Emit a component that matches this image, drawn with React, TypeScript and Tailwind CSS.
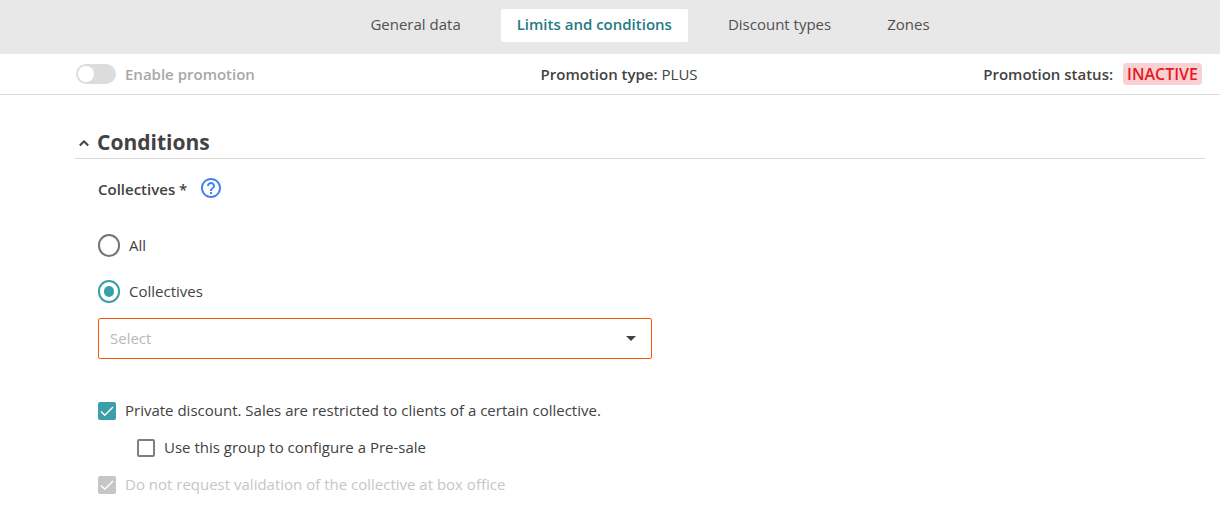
import React, { useState } from 'react';

const tabs = ['General data', 'Limits and conditions', 'Discount types', 'Zones'];

interface CheckboxProps {
  label: string;
  checked: boolean;
  disabled?: boolean;
  className?: string;
  onChange?: (checked: boolean) => void;
}

const Checkbox: React.FC<CheckboxProps> = ({ label, checked, disabled, className = '', onChange }) => (
  <label className={`flex w-fit items-center gap-[9px] leading-5 ${disabled ? 'text-[#c6c6c6]' : ''} ${className}`}>
    <span className="mt-0.5 grid shrink-0">
      <input
        type="checkbox"
        checked={checked}
        disabled={disabled}
        onChange={e => onChange?.(e.target.checked)}
        className="col-start-1 row-start-1 size-[18px] appearance-none rounded-xs border-2 border-[#808080] bg-white checked:border-[#3a9fa8] checked:bg-[#3a9fa8] disabled:border-[#c6c6c6] disabled:bg-[#c6c6c6]"
      />
      {checked && (
        <svg viewBox="0 0 18 18" className="pointer-events-none col-start-1 row-start-1 size-[18px]" fill="none" stroke="#fff" strokeWidth="1.4">
          <path d="M3 9.4 6.8 13.2 15 5" />
        </svg>
      )}
    </span>
    {label}
  </label>
);

interface RadioProps {
  label: string;
  value: string;
  selected: string;
  onSelect: (value: string) => void;
}

const Radio: React.FC<RadioProps> = ({ label, value, selected, onSelect }) => (
  <label className="flex w-fit items-center gap-[9px] leading-[22px]">
    <input
      type="radio"
      name="collectives"
      value={value}
      checked={selected === value}
      onChange={() => onSelect(value)}
      className="mt-px size-[23px] w-[22px] appearance-none rounded-full border-2 border-[#757575] bg-white bg-clip-content p-1 checked:border-[#3a9fa8] checked:bg-[#3a9fa8]"
    />
    {label}
  </label>
);

export default function App() {
  const [activeTab, setActiveTab] = useState('Limits and conditions');
  const [target, setTarget] = useState('collectives');
  const [isOpen, setIsOpen] = useState(true);
  const [isPrivate, setIsPrivate] = useState(true);
  const [isPresale, setIsPresale] = useState(false);

  return (
    <div className="min-h-screen bg-white font-['Open_Sans',sans-serif] text-[15px] text-[#424242]">
      <nav className="flex justify-center gap-6 bg-[#e8e8e8] pt-[9px] pb-3 pl-20">
        {tabs.map(tab => (
          <button
            key={tab}
            type="button"
            onClick={() => setActiveTab(tab)}
            className={`h-[33px] rounded-xs px-4 pb-0.5 ${
              tab === activeTab ? 'bg-white font-semibold text-[#237b83]' : 'text-[#505050]'
            }`}
          >
            {tab}
          </button>
        ))}
      </nav>

      <div className="flex h-[41px] items-center justify-between border-b border-[#dadada] pr-[18px] pl-[76px]">
        <label className="flex items-center gap-[9px] font-semibold text-[#a8a8a8]">
          <span className="grid items-center">
            <input
              type="checkbox"
              role="switch"
              disabled
              className="col-start-1 row-start-1 h-5 w-10 appearance-none rounded-full bg-[#dcdcdc]"
            />
            <span className="pointer-events-none col-start-1 row-start-1 ml-0.5 size-4 rounded-full bg-white" />
          </span>
          Enable promotion
        </label>
        <p>
          <strong className="font-semibold">Promotion type:</strong> PLUS
        </p>
        <p className="flex items-center gap-2.5">
          <strong className="font-semibold">Promotion status:</strong>
          <span className="rounded bg-[#fad1d3] px-1 text-base leading-[22px] font-semibold text-[#e71822]">INACTIVE</span>
        </p>
      </div>

      <main className="pt-8 pr-[15px] pl-[75px]">
        <h2 className="border-b border-[#d8d8d8] text-[21px] font-bold">
          <button
            type="button"
            aria-expanded={isOpen}
            onClick={() => setIsOpen(!isOpen)}
            className="flex items-center gap-2 pl-1 leading-[31px]"
          >
            <svg viewBox="0 0 10 8" className="h-2 w-2.5" fill="none" stroke="currentColor" strokeWidth="2">
              <path d="M.8 6.5 5 2.3 9.2 6.5" />
            </svg>
            Conditions
          </button>
        </h2>

        {isOpen && (
          <section className="pt-[18px] pl-[23px]">
            <div className="flex items-center gap-3">
              <h3 className="leading-6 font-semibold">Collectives *</h3>
              <button type="button" aria-label="Help" className="-mt-0.5 text-[#4480f0]">
                <svg viewBox="0 0 24 24" className="size-6" fill="currentColor">
                  <path d="M11 18h2v-2h-2v2zm1-16C6.48 2 2 6.48 2 12s4.48 10 10 10 10-4.48 10-10S17.52 2 12 2zm0 18c-4.41 0-8-3.59-8-8s3.59-8 8-8 8 3.59 8 8-3.59 8-8 8zm0-14c-2.21 0-4 1.79-4 4h2c0-1.1.9-2 2-2s2 .9 2 2c0 2-3 1.75-3 5h2c0-2.25 3-2.5 3-5 0-2.21-1.79-4-4-4z" />
                </svg>
              </button>
            </div>

            <div className="flex flex-col gap-[22px] pt-8">
              <Radio label="All" value="all" selected={target} onSelect={setTarget} />
              <Radio label="Collectives" value="collectives" selected={target} onSelect={setTarget} />
            </div>

            <div className="mt-[15px] grid w-1/2 items-center">
              <select
                aria-label="Collectives"
                defaultValue=""
                className="col-start-1 row-start-1 h-[41px] w-full appearance-none rounded-xs border border-[#fb5607] bg-white px-[11px] text-[#b8b8b8]"
              >
                <option value="">Select</option>
              </select>
              <svg viewBox="0 0 10 5" className="pointer-events-none col-start-1 row-start-1 mr-4 h-[5px] w-2.5 justify-self-end" fill="#424242">
                <path d="M0 0h10L5 5z" />
              </svg>
            </div>

            <div className="flex flex-col gap-[17px] pt-[41px]">
              <Checkbox
                label="Private discount. Sales are restricted to clients of a certain collective."
                checked={isPrivate}
                onChange={setIsPrivate}
              />
              <Checkbox
                label="Use this group to configure a Pre-sale"
                checked={isPresale}
                onChange={setIsPresale}
                className="ml-[39px]"
              />
              <Checkbox label="Do not request validation of the collective at box office" checked disabled />
            </div>
          </section>
        )}
      </main>
    </div>
  );
}
